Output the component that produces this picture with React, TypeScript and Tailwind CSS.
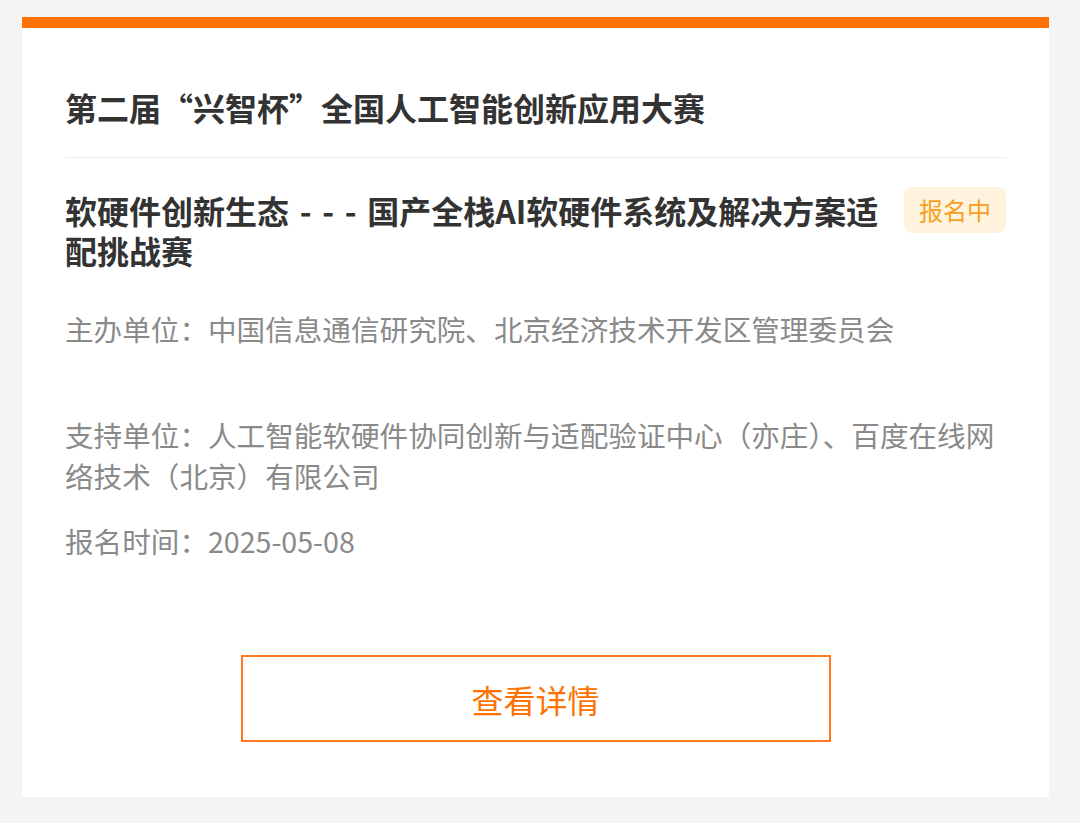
export default function App() {
  const font = { fontFamily: '"Noto Sans CJK SC", "Noto Sans", sans-serif' }
  return (
    <div className="min-h-[823px] w-[1080px] bg-[#f4f4f4] pt-[17px] pl-[22px]" style={font}>
      <div className="w-[1027px] bg-white">
        <div className="h-[11px] bg-[#ff7200]" />
        <div className="px-[43px] pb-[55px]">
          <h1 className="mt-[59px] text-[32px] font-bold leading-[40px] text-[#333333]">
            第二届“兴智杯”全国人工智能创新应用大赛
          </h1>
          <div className="mt-[30px] h-px bg-[#ececec]" />

          <div className="mt-[29px] flex items-start justify-between gap-[20px]">
            <h2 className="mt-[3px] text-[32px] font-bold leading-[40px] text-[#333333]">
              {"软硬件创新生态\u2004-\u2004-\u2004-\u2004国产全栈AI软硬件系统及解决方案适配挑战赛"}
            </h2>
            <span className="shrink-0 rounded-[8px] bg-[#fff3dd] px-[15px] text-[24px] leading-[46px] text-[#f5a01f]">
              报名中
            </span>
          </div>

          <div className="mt-[38px] text-[28.6px] leading-[41px] text-[#8a8a8a]">
            <p className="h-[82px]">主办单位：中国信息通信研究院、北京经济技术开发区管理委员会</p>
            <p className="mt-[24px]">
              支持单位：人工智能软硬件协同创新与适配验证中心（亦庄）、百度在线网络技术（北京）有限公司
            </p>
            <p className="mt-[24px]">报名时间：2025-05-08</p>
          </div>

          <div className="mt-[94px] flex justify-center">
            <button className="h-[87px] w-[590px] border-2 border-[#ff7a1a] text-[32px] text-[#ff7200]">
              查看详情
            </button>
          </div>
        </div>
      </div>
    </div>
  )
}
